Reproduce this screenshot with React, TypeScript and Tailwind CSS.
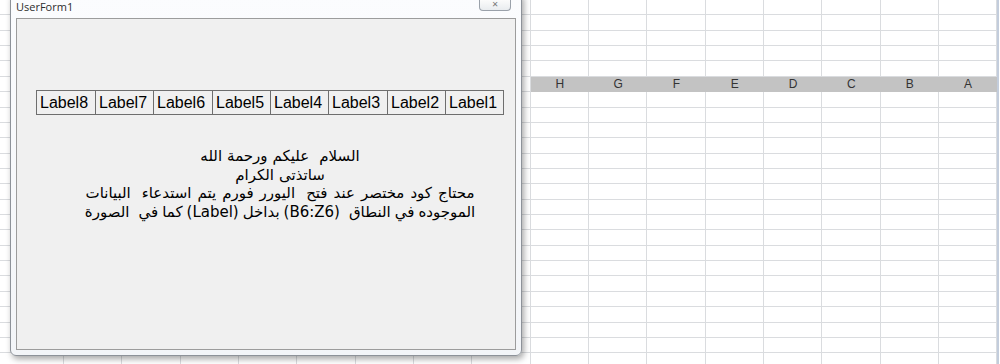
import React from "react";

const COLS = 17;
const ROWS = 24;
const HEADERS = ["H", "G", "F", "E", "D", "C", "B", "A"];

function SheetRow({ index }: { index: number }) {
  const isHeader = index === 5;
  const cells = [];
  for (let c = 0; c < COLS; c++) {
    const w = c === 0 ? "w-[64px]" : "w-[58.33px]";
    if (isHeader && c >= 9) {
      cells.push(
        <div
          key={c}
          className={`${w} shrink-0 h-full bg-[#c3c3c3] flex items-center justify-center text-[12px] text-[#333] font-['Liberation_Sans',sans-serif]`}
        >
          {HEADERS[c - 9]}
        </div>
      );
    } else {
      cells.push(
        <div key={c} className={`${w} shrink-0 h-full border-r border-b border-[#dadcdf]`} />
      );
    }
  }
  return <div className="flex h-[15.36px]">{cells}</div>;
}

// words in natural (logical) reading order; gap = space after the word
const line1 = [["السلام", 10], ["عليكم", 5], ["ورحمة", 5], ["الله", 0]] as const;
const line2 = [["ساتذتى", 5], ["الكرام", 0]] as const;
const line3 = [
  ["محتاج", 6],
  ["كود", 6],
  ["مختصر", 6],
  ["عند", 6],
  ["فتح", 11],
  ["اليورر", 6],
  ["فورم", 6],
  ["يتم", 6],
  ["استدعاء", 11],
  ["البيانات", 0],
] as const;
const line4 = [
  ["الموجوده", 4],
  ["في", 4],
  ["النطاق", 9],
  ["(B6:Z6)", 4],
  ["بداخل", 4],
  ["(Label)", 4],
  ["كما", 4],
  ["في", 9],
  ["الصورة", 0],
] as const;

function WordLine({ words }: { words: readonly (readonly [string, number])[] }) {
  return (
    <div className="flex justify-center h-[18.7px] items-center" dir="rtl">
      {words.map(([w, gap], i) => (
        <span
          key={i}
          dir={w.startsWith("(") ? "ltr" : "rtl"}
          className="inline-block whitespace-pre"
          style={{ marginLeft: gap }}
        >
          {w}
        </span>
      ))}
    </div>
  );
}

export default function App() {
  const labels = ["Label8", "Label7", "Label6", "Label5", "Label4", "Label3", "Label2", "Label1"];
  const widths = ["w-[58px]", "w-[58px]", "w-[59px]", "w-[58px]", "w-[58px]", "w-[59px]", "w-[58px]", "w-[58px]"];
  return (
    <div className="relative w-[1000px] h-[364px] overflow-hidden bg-white">
      {/* spreadsheet */}
      <div className="flex">
        <div className="flex flex-col w-[997px]">
          {Array.from({ length: ROWS }).map((_, i) => (
            <SheetRow key={i} index={i} />
          ))}
        </div>
        <div className="w-[2px] h-[364px] bg-[#c3cddc]" />
      </div>

      {/* user form window */}
      <div className="absolute left-[10px] top-[-6px] w-[512px] h-[362px] rounded-b-[6px] border border-[#8d9299] bg-gradient-to-b from-[#fbfcfe] to-[#f3f5f8] shadow-[2px_3px_6px_rgba(0,0,0,0.35)] flex flex-col">
        <div className="relative h-[23px] shrink-0 flex items-end pb-[6px] pl-[5px]">
          <span className="text-[11px] leading-none text-[#2d2d2d] font-['Open_Sans',sans-serif]">UserForm1</span>
          <div className="absolute right-[10px] top-[5px] w-[32px] h-[11px] rounded-b-[4px] border border-t-0 border-[#9aa1aa] bg-gradient-to-b from-[#fbfbfb] to-[#e9ecef] flex items-center justify-center">
            <span className="text-[8px] leading-[8px] font-bold text-[#7a7a7a] font-['DejaVu_Sans',sans-serif]">✕</span>
          </div>
        </div>
        <div className="flex-1 mx-[5px] mb-[5px] border border-[#9c9c9c] bg-[#f0f0f0] flex flex-col">
          <div className="h-[71px]" />
          <div className="ml-[19px] flex border border-[#6e6e6e] w-fit h-[25px]">
            {labels.map((l, i) => (
              <div
                key={l}
                className={`${widths[i]} ${i > 0 ? "border-l border-[#6e6e6e]" : ""} flex items-center pl-[3px] text-[16px] text-black font-['Liberation_Sans',sans-serif] leading-none`}
              >
                {l}
              </div>
            ))}
          </div>
          <div className="h-[32px]" />
          <div className="pl-[28px] text-[15px] text-black font-['DejaVu_Sans',sans-serif] leading-none">
            <WordLine words={line1} />
            <WordLine words={line2} />
            <WordLine words={line3} />
            <WordLine words={line4} />
          </div>
        </div>
      </div>
    </div>
  );
}
